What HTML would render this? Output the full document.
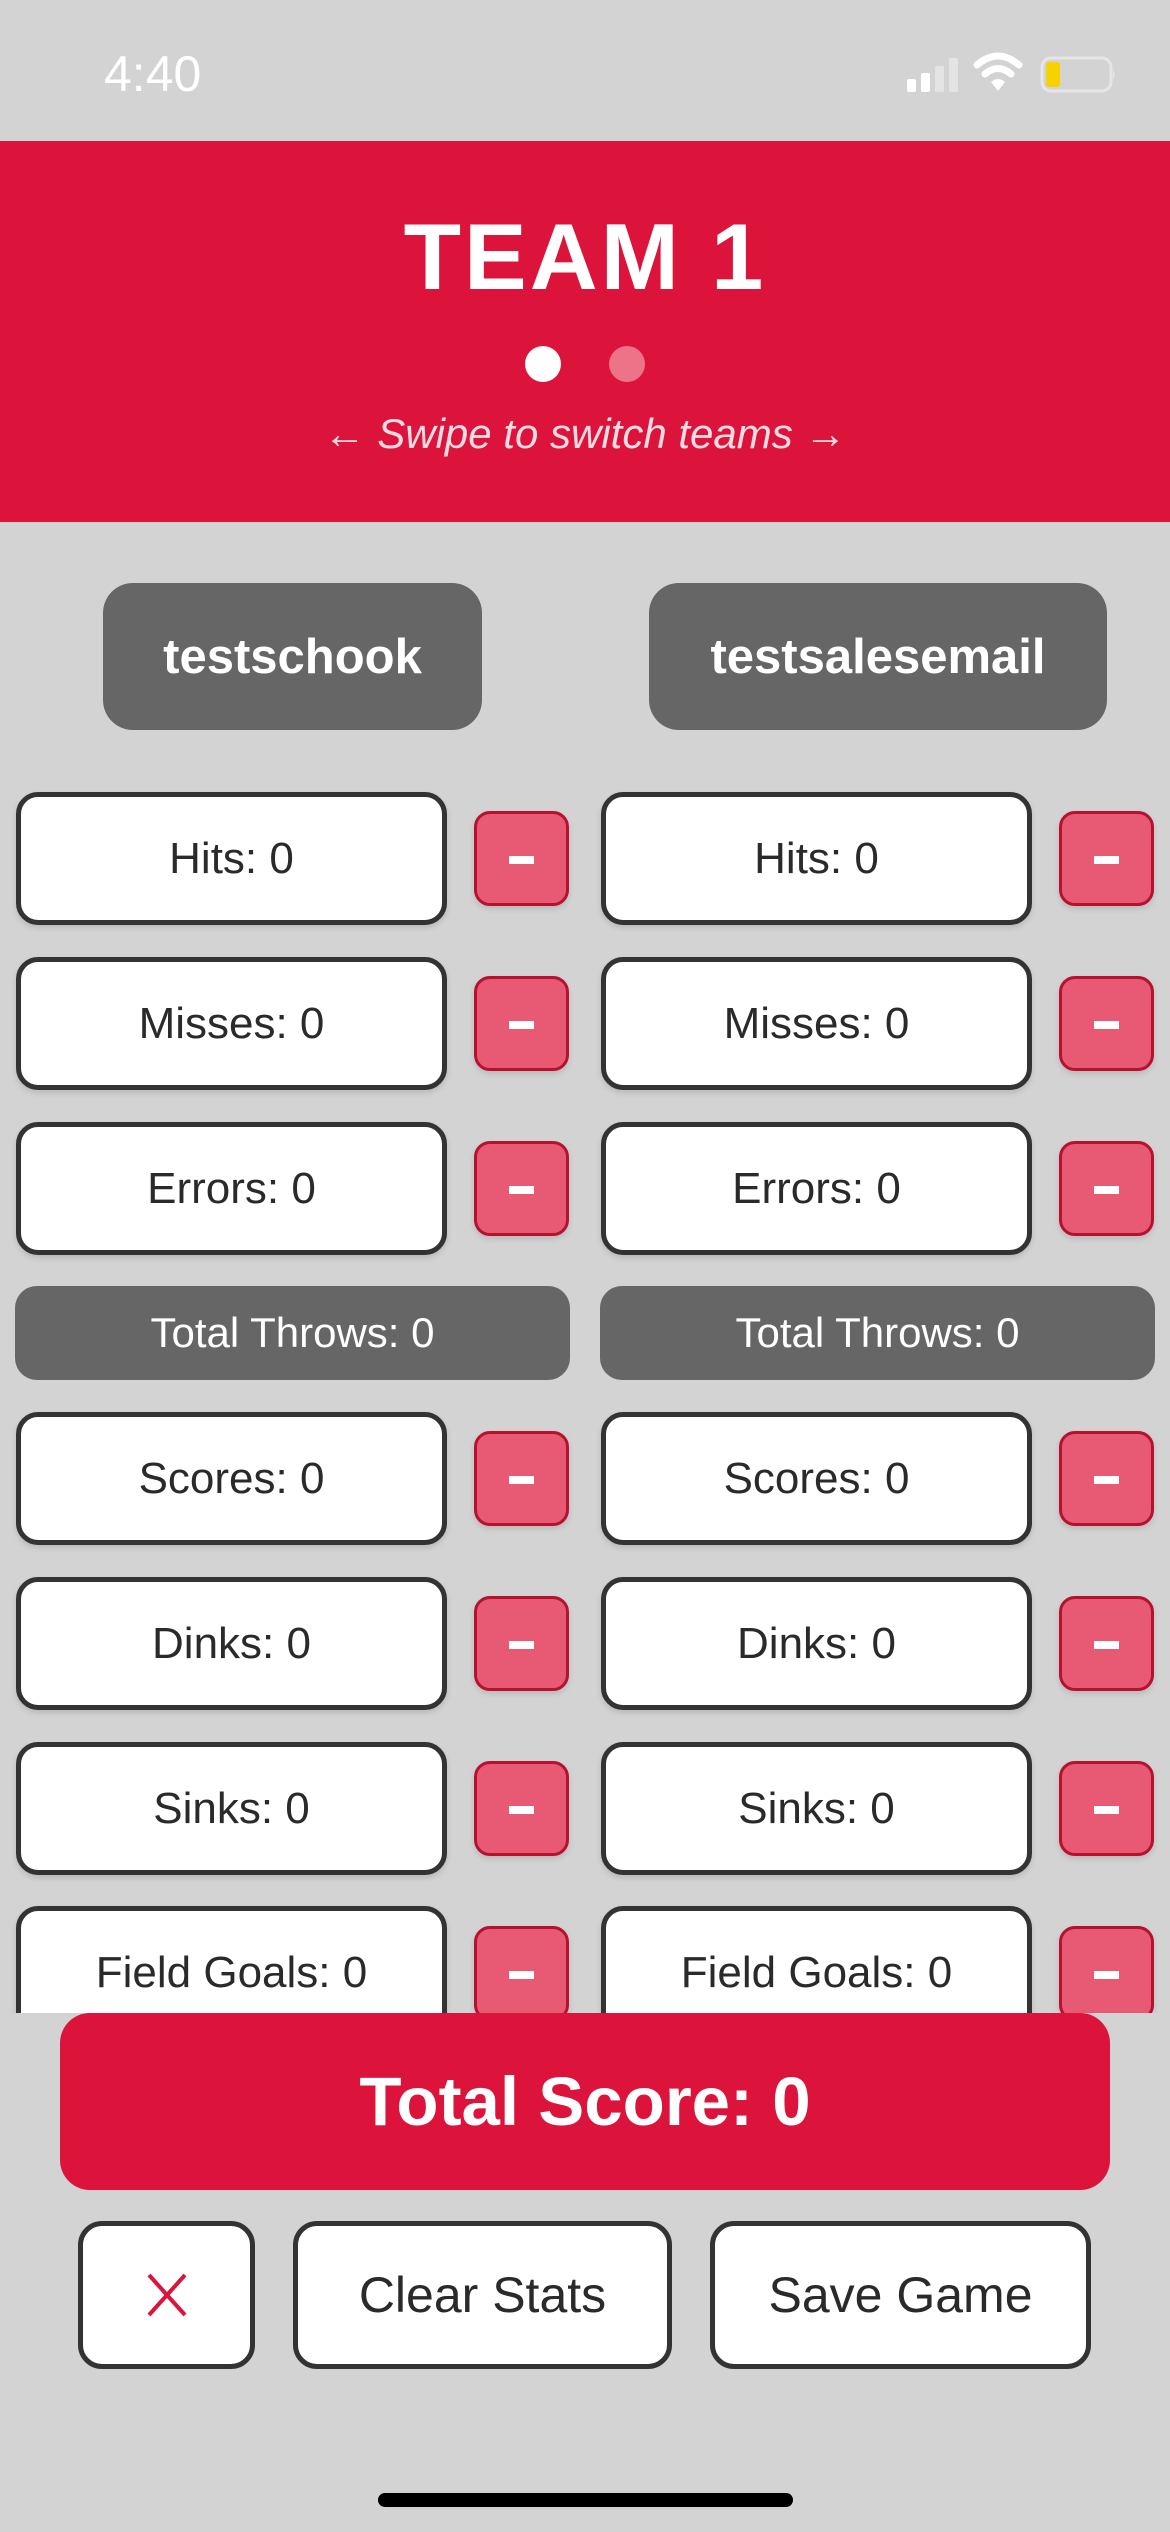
<!DOCTYPE html>
<html><head><meta charset="utf-8"><style>
*{margin:0;padding:0;box-sizing:border-box}
body{width:1170px;height:2532px;background:#d3d3d3;position:relative;overflow:hidden;font-family:"Liberation Sans",sans-serif}
.a{position:absolute}
.time{left:104px;top:45px;font-size:50px;color:#fff;font-weight:500}
.hdr{left:0;top:141px;width:1170px;height:381px;background:#dc143c}
.t1{left:0;width:1170px;top:203px;text-align:center;color:#fff;font-weight:bold;font-size:94px;letter-spacing:3px}
.dot{width:36px;height:36px;border-radius:50%;top:346px}
.sw{left:0;width:1170px;top:410px;text-align:center;color:rgba(255,255,255,.85);font-style:italic;font-size:42px}
.nm{background:#666;border-radius:30px;color:#fff;font-weight:bold;font-size:49px;display:flex;align-items:center;justify-content:center;top:583px;height:147px}
.st{background:#fff;border:5px solid #333;border-radius:22px;height:133px;width:431px;display:flex;align-items:center;justify-content:center;font-size:44px;color:#2a2a2a;box-shadow:0 3px 6px rgba(0,0,0,.12)}
.mn{background:#e85a74;border:3px solid #b5122f;border-radius:16px;width:95px;height:95px;box-shadow:0 3px 6px rgba(0,0,0,.12)}
.mn:after{content:"";position:absolute;left:32px;top:42px;width:25px;height:8px;background:#fff}
.tt{background:#666;border-radius:22px;height:94px;width:555px;color:#fff;font-size:42px;display:flex;align-items:center;justify-content:center}
.btn{background:#fff;border:5px solid #333;border-radius:24px;top:2221px;height:148px;display:flex;align-items:center;justify-content:center;font-size:50px;color:#2a2a2a}
</style></head><body>
<div class="a time">4:40</div>
<svg class="a" style="left:900px;top:30px" width="240" height="90">
<rect x="7" y="49" width="9" height="13" rx="2" fill="#fff"/>
<rect x="21" y="43" width="9" height="19" rx="2" fill="#fff"/>
<rect x="35" y="36" width="9" height="26" rx="2" fill="#e4e4e4"/>
<rect x="49" y="28" width="9" height="34" rx="2" fill="#e4e4e4"/>
<path d="M77 35 Q98 17 119 35" stroke="#fff" stroke-width="7" fill="none" stroke-linecap="round"/>
<path d="M85 44 Q98 33 111 44" stroke="#fff" stroke-width="7" fill="none" stroke-linecap="round"/>
<path d="M91 52 L98 61 L105 52 Q98 46 91 52Z" fill="#fff"/>
<rect x="142" y="28" width="69" height="33" rx="9" fill="none" stroke="#e6e6e6" stroke-width="3"/>
<rect x="146" y="32" width="14" height="25" rx="3" fill="#f7d200"/>
<path d="M213 39 Q216 44 213 50Z" fill="#e6e6e6"/>
</svg>
<div class="a hdr"></div>
<div class="a t1">TEAM 1</div>
<div class="a dot" style="left:525px;background:#fff"></div>
<div class="a dot" style="left:609px;background:#ec7388"></div>
<div class="a sw">← Swipe to switch teams →</div>
<div class="a nm" style="left:103px;width:379px">testschook</div>
<div class="a nm" style="left:649px;width:458px">testsalesemail</div>

<div class="a" style="left:0;top:0;width:1170px;height:2013px;overflow:hidden">
<div class="a st" style="left:16px;top:792px">Hits: 0</div><div class="a mn" style="left:474px;top:811px"></div>
<div class="a st" style="left:601px;top:792px">Hits: 0</div><div class="a mn" style="left:1059px;top:811px"></div>
<div class="a st" style="left:16px;top:957px">Misses: 0</div><div class="a mn" style="left:474px;top:976px"></div>
<div class="a st" style="left:601px;top:957px">Misses: 0</div><div class="a mn" style="left:1059px;top:976px"></div>
<div class="a st" style="left:16px;top:1122px">Errors: 0</div><div class="a mn" style="left:474px;top:1141px"></div>
<div class="a st" style="left:601px;top:1122px">Errors: 0</div><div class="a mn" style="left:1059px;top:1141px"></div>
<div class="a tt" style="left:15px;top:1286px">Total Throws: 0</div>
<div class="a tt" style="left:600px;top:1286px">Total Throws: 0</div>
<div class="a st" style="left:16px;top:1412px">Scores: 0</div><div class="a mn" style="left:474px;top:1431px"></div>
<div class="a st" style="left:601px;top:1412px">Scores: 0</div><div class="a mn" style="left:1059px;top:1431px"></div>
<div class="a st" style="left:16px;top:1577px">Dinks: 0</div><div class="a mn" style="left:474px;top:1596px"></div>
<div class="a st" style="left:601px;top:1577px">Dinks: 0</div><div class="a mn" style="left:1059px;top:1596px"></div>
<div class="a st" style="left:16px;top:1742px">Sinks: 0</div><div class="a mn" style="left:474px;top:1761px"></div>
<div class="a st" style="left:601px;top:1742px">Sinks: 0</div><div class="a mn" style="left:1059px;top:1761px"></div>
<div class="a st" style="left:16px;top:1906px">Field Goals: 0</div><div class="a mn" style="left:474px;top:1926px"></div>
<div class="a st" style="left:601px;top:1906px">Field Goals: 0</div><div class="a mn" style="left:1059px;top:1926px"></div>
</div>

<div class="a" style="left:60px;top:2013px;width:1050px;height:177px;background:#dc143c;border-radius:30px;color:#fff;font-weight:bold;font-size:69px;display:flex;align-items:center;justify-content:center">Total Score: 0</div>
<div class="a btn" style="left:78px;width:177px"><svg width="44" height="44"><path d="M4 2 L40 42 M40 2 L4 42" stroke="#dc143c" stroke-width="4"/></svg></div>
<div class="a btn" style="left:293px;width:379px">Clear Stats</div>
<div class="a btn" style="left:710px;width:381px">Save Game</div>
<div class="a" style="left:378px;top:2493px;width:415px;height:14px;background:#000;border-radius:7px"></div>
</body></html>
